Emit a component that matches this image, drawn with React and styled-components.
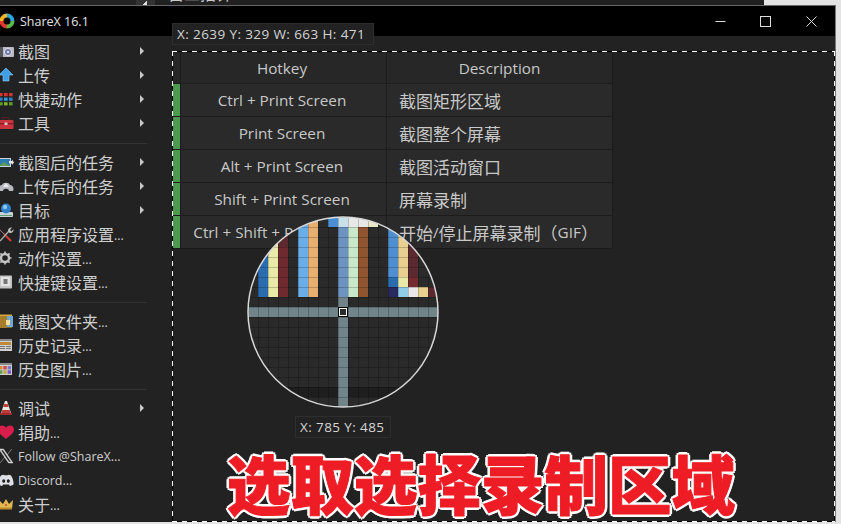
import React from "react";
import styled, { createGlobalStyle } from "styled-components";

const Global = createGlobalStyle`
  html, body { margin: 0; padding: 0; background: #e3e3e3; overflow: hidden; }
  #root { width: 841px; height: 524px; }
`;
const UI = `"Open Sans", "Noto Sans CJK SC", sans-serif`;

const Page = styled.div`
  position: relative; width: 841px; height: 524px; overflow: hidden;
  font-family: ${UI}; color: #cfcfcf;
`;
const BehindStrip = styled.div`
  width: 764px; height: 5px; background: #202020; overflow: hidden; display: flex; position: relative;
`;
const BehindMenu = styled.div`
  width: 136px; background: #232323;
`;
const BehindArrow = styled.div`
  width: 19px; background: #333; display: flex; justify-content: center; align-items: flex-end;
  &::after { content: ""; width: 5px; height: 5px; margin-right: 3px; background: linear-gradient(45deg, #ddd 50%, transparent 50%); transform: scaleX(-1); }
`;
const BehindText = styled.div`
  margin: -17px 0 0 13px; font-size: 16px; line-height: 22px; color: #c9c9c9; white-space: nowrap;
`;
const Win = styled.div`
  width: 835px; height: 516px; border-top: 1px solid #666; border-right: 1px solid #777;
  display: flex; flex-direction: column; background: #222; box-sizing: content-box;
`;
const TitleBar = styled.div`
  height: 30px; flex: none; background: #000; display: flex; align-items: center; color: #e4e4e4;
`;
const Logo = styled.svg`
  width: 16px; height: 16px; margin-left: -1px; flex: none;
`;
const Title = styled.div`
  margin-left: 5px; font-size: 12.5px;
`;
const Controls = styled.div`
  margin-left: auto; margin-right: 1px; display: flex;
`;
const Ctl = styled.div`
  width: 45.5px; height: 30px; display: flex; align-items: center; justify-content: center;
  svg { width: 11px; height: 11px; }
`;
const Body = styled.div`
  flex: 1; display: flex; min-height: 0;
`;
const Side = styled.div`
  width: 147px; flex: none; padding: 3px 0 0; margin-right: 26px; overflow: hidden;
`;
const Item = styled.div`
  height: 24px; display: flex; align-items: center; position: relative; white-space: nowrap;
  font-size: ${p => (p.$small ? "12.5px" : "16px")}; color: #cfcfcf;
`;
const Dots = styled.span`
  font-size: 12.5px; align-self: flex-end; line-height: 20px;
`;
const ItemIcon = styled.svg`
  width: 16px; height: 16px; flex: none; margin: 0 4px 0 -2px;
`;
const SubArrow = styled.span`
  position: absolute; left: 140px; top: 8px; width: 0; height: 0;
  border-left: 4px solid #c8c8c8; border-top: 4px solid transparent; border-bottom: 4px solid transparent;
`;
const Sep = styled.div`
  height: 15px; display: flex; align-items: center;
  &::after { content: ""; width: 100%; height: 1px; background: #333; margin-top: 1px; }
`;
const Canvas = styled.div`
  flex: 1; padding-top: 17px;
`;
const Table = styled.div`
  width: 440px;
`;
const Row = styled.div`
  display: grid; grid-template-columns: 7px 205px 225px; column-gap: 1px;
  height: ${p => (p.$head ? "30px" : "32px")}; background: #1c1c1c;
  border-bottom: 1px solid #1c1c1c; border-right: 1px solid #1c1c1c; width: 439px;
`;
const Mark = styled.div`
  background: ${p => (p.$on ? "#4b9a50" : "#272727")};
`;
const KeyCell = styled.div`
  background: ${p => (p.$head ? "#272727" : "#2a2a2a")};
  display: flex; align-items: center; justify-content: center; font-size: 15.3px; color: #c8c8c8;
  white-space: nowrap; overflow: hidden; padding-right: 3px;
`;
const DescCell = styled.div`
  background: ${p => (p.$head ? "#272727" : "#2a2a2a")};
  display: flex; align-items: center; white-space: nowrap; overflow: hidden; color: #c8c8c8;
  font-size: ${p => (p.$head ? "15.3px" : "17px")};
  justify-content: ${p => (p.$head ? "center" : "flex-start")};
  padding-left: ${p => (p.$head ? "0" : "12px")};
`;
const Latin = styled.span`
  font-size: 15.3px;
`;
const Selection = styled.div`
  position: absolute; left: 172px; top: 51px; width: 663px; height: 471px;
  background-image:
    repeating-linear-gradient(90deg, #fff 0 5px, #000 5px 10px),
    repeating-linear-gradient(90deg, #fff 0 5px, #000 5px 10px),
    repeating-linear-gradient(180deg, #fff 0 5px, #000 5px 10px),
    repeating-linear-gradient(180deg, #fff 0 5px, #000 5px 10px);
  background-size: 100% 1px, 100% 1px, 1px 100%, 1px 100%;
  background-position: 0 0, 0 100%, 0 0, 100% 0;
  background-repeat: no-repeat;
`;
const InfoTag = styled.div`
  position: absolute; left: ${p => p.$x}px; top: ${p => p.$y}px; height: 20px; padding: 0 ${p => p.$pad}px 0 4px;
  background: #222; border: 1px solid #2e2e2e; font-size: 13.5px; line-height: 20px; color: #d4d4d4;
  letter-spacing: .4px; white-space: nowrap;
`;
const Magnifier = styled.svg`
  position: absolute; left: 246px; top: 215px; width: 194px; height: 194px;
`;
const Banner = styled.div`
  position: absolute; left: 227px; top: 441px; font-size: 63.5px; line-height: 80px; letter-spacing: 0;
  font-family: "Noto Sans CJK SC", sans-serif; font-weight: 900; color: #ee1c25; white-space: nowrap;
  -webkit-text-stroke: 1px #ee1c25;
  text-shadow: 3px 0 #fff, -3px 0 #fff, 0 3px #fff, 0 -3px #fff, 2px 2px #fff, -2px 2px #fff, 2px -2px #fff, -2px -2px #fff;
`;

const icons = {
  camera: <><rect x="0" y="4" width="16" height="10" rx="1" fill="#b9b9c0"/><rect x="0" y="4" width="5" height="10" fill="#55555c"/><circle cx="10" cy="9" r="3.6" fill="#6a76a8" stroke="#e0e0e6"/><circle cx="10" cy="9" r="1.3" fill="#cdd4f0"/></>,
  up: <path d="M8 1 15 8H11V14H5V8H1Z" fill="#3f9fe6" stroke="#8ad0f8" strokeWidth=".6"/>,
  grid: <>{["#d9322e","#d9322e","#d9322e","#2f7fd0","#2f9be0","#2f7fd0","#5f9e22","#7cb52a","#5f9e22"].map((c,i)=><rect key={i} x={1+(i%3)*5} y={2+Math.floor(i/3)*4.6} width="3.6" height="3.2" fill={c}/>)}</>,
  box: <><path d="M5 5V2.5H11V5" fill="none" stroke="#222" strokeWidth="1.3"/><path d="M5 5V2.5H11V5" fill="none" stroke="#7a1b22" strokeWidth=".6"/><rect x="0.5" y="5" width="15" height="9" rx="1" fill="#c9343f"/><rect x="0.5" y="8" width="15" height="1.4" fill="#8a1c26"/><rect x="6.5" y="7.5" width="3" height="2.5" fill="#e8c6c0"/></>,
  imgTask: <><rect x="0" y="4" width="13" height="9" fill="#c9d3dc"/><rect x="1" y="5" width="11" height="7" fill="#2c7bb0"/><path d="M1 12 6 8 12 12Z" fill="#5f9a58"/><path d="M11 7h3V5.5L16 8.5 14 11V9.5H11Z" fill="#e6e6e6"/></>,
  cloud: <><path d="M1 13C-.5 9 2 7 4 7 5 4 11 4 12 7 14.5 7 16.5 10 15 13H11C11 10 5 10 5 13Z" fill="#b8b8c0"/><path d="M8 5 11 9H5Z" fill="#e8e8ee"/></>,
  target: <><rect x="1" y="10" width="14" height="5" rx="1" fill="#c8d2d8"/><rect x="2" y="13" width="12" height="1" fill="#5f9e72"/><circle cx="8" cy="6.5" r="5" fill="#2f80c8"/><circle cx="7" cy="5" r="2.2" fill="#8cc6ee"/></>,
  tools: <><path d="M0 2 13 15" stroke="#e03a3a" strokeWidth="1.8"/><path d="M0 2 6 8" stroke="#222" strokeWidth="2"/><path d="M0 2 6 8" stroke="#999" strokeWidth=".8"/><path d="M2 15 11 5" stroke="#a8a8a8" strokeWidth="1.5"/><path d="M10 5C10 2.500 12 1 14 1.500L12 4 13.500 5.500 15.500 3C16 5.500 14 7.500 11.500 7Z" fill="#c4c4c4"/></>,
  gear: <><circle cx="7" cy="8" r="4" fill="none" stroke="#c4c4c4" strokeWidth="2.4"/><path d="M7 1.500V14.500M.5 8H13.500M2.400 3.400 11.600 12.600M11.600 3.400 2.400 12.600" stroke="#c4c4c4" strokeWidth="1.700" strokeDasharray="2.200 8.600"/><circle cx="7" cy="8" r="1.500" fill="#222"/></>,
  key: <><rect x="1" y="1.500" width="13" height="13" rx="1" fill="#c4c4c4"/><rect x="3" y="3" width="9" height="9" fill="#e2e2e2"/><rect x="5.500" y="5" width="4" height="5" fill="#777"/></>,
  folder: <><rect x="2" y="1.500" width="12" height="13" fill="#d8a83c"/><rect x="7" y="3" width="8" height="11" fill="#6ca7d6"/><rect x="2" y="3" width="7" height="12" fill="#a87c2a"/><rect x="8" y="7" width="4" height="5" fill="#f0e0a0"/></>,
  hist: <><rect x="0" y="2" width="14" height="12" fill="#d0d0d0"/><rect x="0" y="2" width="14" height="2" fill="#8a8a8a"/><rect x="1" y="5" width="12" height="3" fill="#c08a3c"/><rect x="1" y="9" width="6" height="1" fill="#777"/><rect x="8" y="9" width="5" height="1" fill="#777"/><rect x="1" y="11" width="6" height="1" fill="#777"/><rect x="8" y="11" width="5" height="1" fill="#777"/></>,
  histImg: <><rect x="0" y="2" width="14" height="12" fill="#d0d0d0"/><rect x="0" y="2" width="14" height="2" fill="#8a8a8a"/>{["#d08a3c","#d04a4a","#7a7ac8","#5a9e5a","#c8a83c","#7a5ac8"].map((c,i)=><rect key={i} x={1+(i%3)*4.300} y={5+Math.floor(i/3)*4.300} width="3.400" height="3.500" fill={c}/>)}</>,
  cone: <><path d="M7 1H9L13 13H3Z" fill="#e8e4e0"/><path d="M6.200 4H9.800L10.600 7H5.300ZM4.300 10H11.700L12.700 13H3.300Z" fill="#c03a3a"/><rect x="2" y="13" width="12" height="2" fill="#a02c30"/></>,
  heart: <path d="M8 15C3 11 0 8.500 0 5.500 0 3 2 1.500 4 1.500 6 1.500 7.500 2.500 8 4 8.500 2.500 10 1.500 12 1.500 14 1.500 16 3 16 5.500 16 8.500 13 11 8 15Z" fill="#d81e4a"/>,
  x: <path d="M1 1H5.500L15 15H10.500ZM2.800 2 11 14H13.200L5 2ZM13.800 1 9 7M7 9 2 15" fill="#d6d6d6" stroke="#d6d6d6" strokeWidth=".5"/>,
  discord: <path d="M3 3.500C5 2.600 6 2.500 6.500 3.300H9.500C10 2.500 11 2.600 13 3.500 15 6.500 15.700 9.500 15.500 12.500 14 13.500 12.800 13.900 11.800 14L11 12.500H5L4.200 14C3.200 13.900 2 13.500.5 12.500.3 9.500 1 6.500 3 3.500ZM5.700 7.200C4.800 7.200 4.200 8 4.200 9S4.800 10.800 5.700 10.800 7.200 10 7.200 9 6.600 7.200 5.700 7.200ZM10.300 7.200C9.400 7.200 8.800 8 8.800 9S9.400 10.800 10.300 10.800 11.800 10 11.800 9 11.200 7.200 10.300 7.200Z" fill="#dfe0e6" fillRule="evenodd"/>,
  crown: <><path d="M1 4 5 8 8 3 11 8 15 4 14 13H2Z" fill="#e2b750"/><rect x="2" y="11.500" width="12" height="2" fill="#b88a2c"/><circle cx="8" cy="9" r="1" fill="#c8453a"/></>,
};

const menu = [
  ["camera","截图",1],["up","上传",1],["grid","快捷动作",1],["box","工具",1],null,
  ["imgTask","截图后的任务",1],["cloud","上传后的任务",1],["target","目标",1],["tools","应用程序设置",0,0,1],["gear","动作设置",0,0,1],["key","快捷键设置",0,0,1],null,
  ["folder","截图文件夹",0,0,1],["hist","历史记录",0,0,1],["histImg","历史图片",0,0,1],null,
  ["cone","调试",1],["heart","捐助",0,0,1],["x","Follow @ShareX...",0,1],["discord","Discord...",0,1],["crown","关于",0,0,1],
];
const rows = [
  ["Ctrl + Print Screen","截图矩形区域"],["Print Screen","截图整个屏幕"],["Alt + Print Screen","截图活动窗口"],
  ["Shift + Print Screen","屏幕录制"],["Ctrl + Shift + Print Screen",<>开始<Latin>/</Latin>停止屏幕录制（<Latin>GIF</Latin>）</>],
];

const bars = [
  [-8,-9,-3,"#2a6cad"],[-7,-9,-2,"#eaeaa8"],[-6,-9,-2,"#6f2a2f"],[-6,-9,-7,"#5a2a2e"],
  [-8,-2,-2,"#2a6cad"],
  [-4,-9,-2,"#6aaee8"],[-3,-9,-2,"#e8b070"],[-1,-9,-9,"#4a8fd6"],
  [0,-8,-2,"#6d94c0"],[0,-9,-9,"#c8e0e8"],[1,-8,-2,"#c8e8cc"],[1,-9,-9,"#e8e8e8"],
  [2,-8,-2,"#8f5530"],[2,-9,-9,"#e8e8e8"],[3,-9,-9,"#e8e8c8"],
  [5,-9,-4,"#4f8fd0"],[5,-3,-3,"#2b6cad"],[5,-2,-2,"#2a2a60"],
  [6,-9,-4,"#e8d090"],[6,-3,-3,"#eaeaa8"],[6,-2,-2,"#90cde8"],
  [7,-9,-4,"#5a2a30"],[7,-3,-3,"#752a30"],[7,-2,-2,"#e8e8e8"],
  [8,-2,-2,"#e8d090"],[9,-2,-2,"#5a2a30"],
  [0,-1,9,"#70848a"],[-9,0,0,"#70848a"],
];
function cellColor(i, j) {
  if (j === 0) return "#70848a";
  let c = j === 8 ? "#1e1e1e" : "#2a2a2a";
  for (const [col, a, b, color] of bars) {
    if (col === i && j >= a && j <= b) c = color;
  }
  return c;
}
const cells = [];
for (let j = -10; j <= 10; j++) for (let i = -10; i <= 10; i++) {
  cells.push(<rect key={`${i}_${j}`} x={92 + 10 * i} y={92 + 10 * j} width="10" height="10" fill={cellColor(i, j)} />);
}
const lines = [];
for (let k = -10; k <= 10; k++) {
  lines.push(<rect key={`v${k}`} x={92 + 10 * k} y="0" width="1" height="194" fill="#000" opacity=".2" />);
  lines.push(<rect key={`h${k}`} x="0" y={92 + 10 * k} width="194" height="1" fill="#000" opacity=".2" />);
}

export default function App() {
  return (
    <Page>
      <Global />
      <BehindStrip>
        <BehindMenu />
        <BehindArrow />
        <BehindText>自三招针</BehindText>
      </BehindStrip>
      <Win>
        <TitleBar>
          <Logo viewBox="0 0 16 16">
            <circle cx="8" cy="8" r="5.500" fill="none" stroke="#e8382e" strokeWidth="4" strokeDasharray="8.600 26" transform="rotate(90 8 8)"/>
            <circle cx="8" cy="8" r="5.500" fill="none" stroke="#f0b428" strokeWidth="4" strokeDasharray="8.600 26" transform="rotate(180 8 8)"/>
            <circle cx="8" cy="8" r="5.500" fill="none" stroke="#2aa6e0" strokeWidth="4" strokeDasharray="8.600 26" transform="rotate(270 8 8)"/>
            <circle cx="8" cy="8" r="5.500" fill="none" stroke="#58b848" strokeWidth="4" strokeDasharray="8.600 26"/>
          </Logo>
          <Title>ShareX 16.1</Title>
          <Controls>
            <Ctl><svg viewBox="0 0 11 11"><path d="M0.500 5.500H10.500" stroke="#ddd"/></svg></Ctl>
            <Ctl><svg viewBox="0 0 11 11"><rect x=".5" y=".5" width="10" height="10" fill="none" stroke="#ddd"/></svg></Ctl>
            <Ctl><svg viewBox="0 0 11 11"><path d="M.5.500 10.500 10.500M10.500.500 .5 10.500" stroke="#ddd"/></svg></Ctl>
          </Controls>
        </TitleBar>
        <Body>
          <Side>
            {menu.map((m, i) =>
              m ? (
                <Item key={i} $small={m[3]}>
                  <ItemIcon viewBox="0 0 16 16">{icons[m[0]]}</ItemIcon>
                  {m[1]}
                  {m[4] ? <Dots>...</Dots> : null}
                  {m[2] ? <SubArrow /> : null}
                </Item>
              ) : (
                <Sep key={i} />
              )
            )}
          </Side>
          <Canvas>
            <Table>
              <Row $head>
                <Mark />
                <KeyCell $head>Hotkey</KeyCell>
                <DescCell $head>Description</DescCell>
              </Row>
              {rows.map(r => (
                <Row key={r[0]}>
                  <Mark $on />
                  <KeyCell>{r[0]}</KeyCell>
                  <DescCell>{r[1]}</DescCell>
                </Row>
              ))}
            </Table>
          </Canvas>
        </Body>
      </Win>
      <Selection />
      <InfoTag $x={172} $y={23} $pad={8}>X: 2639 Y: 329 W: 663 H: 471</InfoTag>
      <InfoTag $x={295} $y={416} $pad={6}>X: 785 Y: 485</InfoTag>
      <Magnifier viewBox="0 0 194 194">
        <defs>
          <clipPath id="lens"><circle cx="97" cy="97" r="95" /></clipPath>
        </defs>
        <g clipPath="url(#lens)">
          {cells}
          {lines}
        </g>
        <rect x="92.500" y="92.500" width="9" height="9" fill="#2a2a2a" stroke="#000" strokeWidth="1" />
        <rect x="93.500" y="93.500" width="7" height="7" fill="#2a2a2a" stroke="#fff" strokeWidth="1" />
        <circle cx="97" cy="97" r="95" fill="none" stroke="#d8d8d8" strokeWidth="1.500" />
      </Magnifier>
      <Banner>选取选择录制区域</Banner>
    </Page>
  );
}
